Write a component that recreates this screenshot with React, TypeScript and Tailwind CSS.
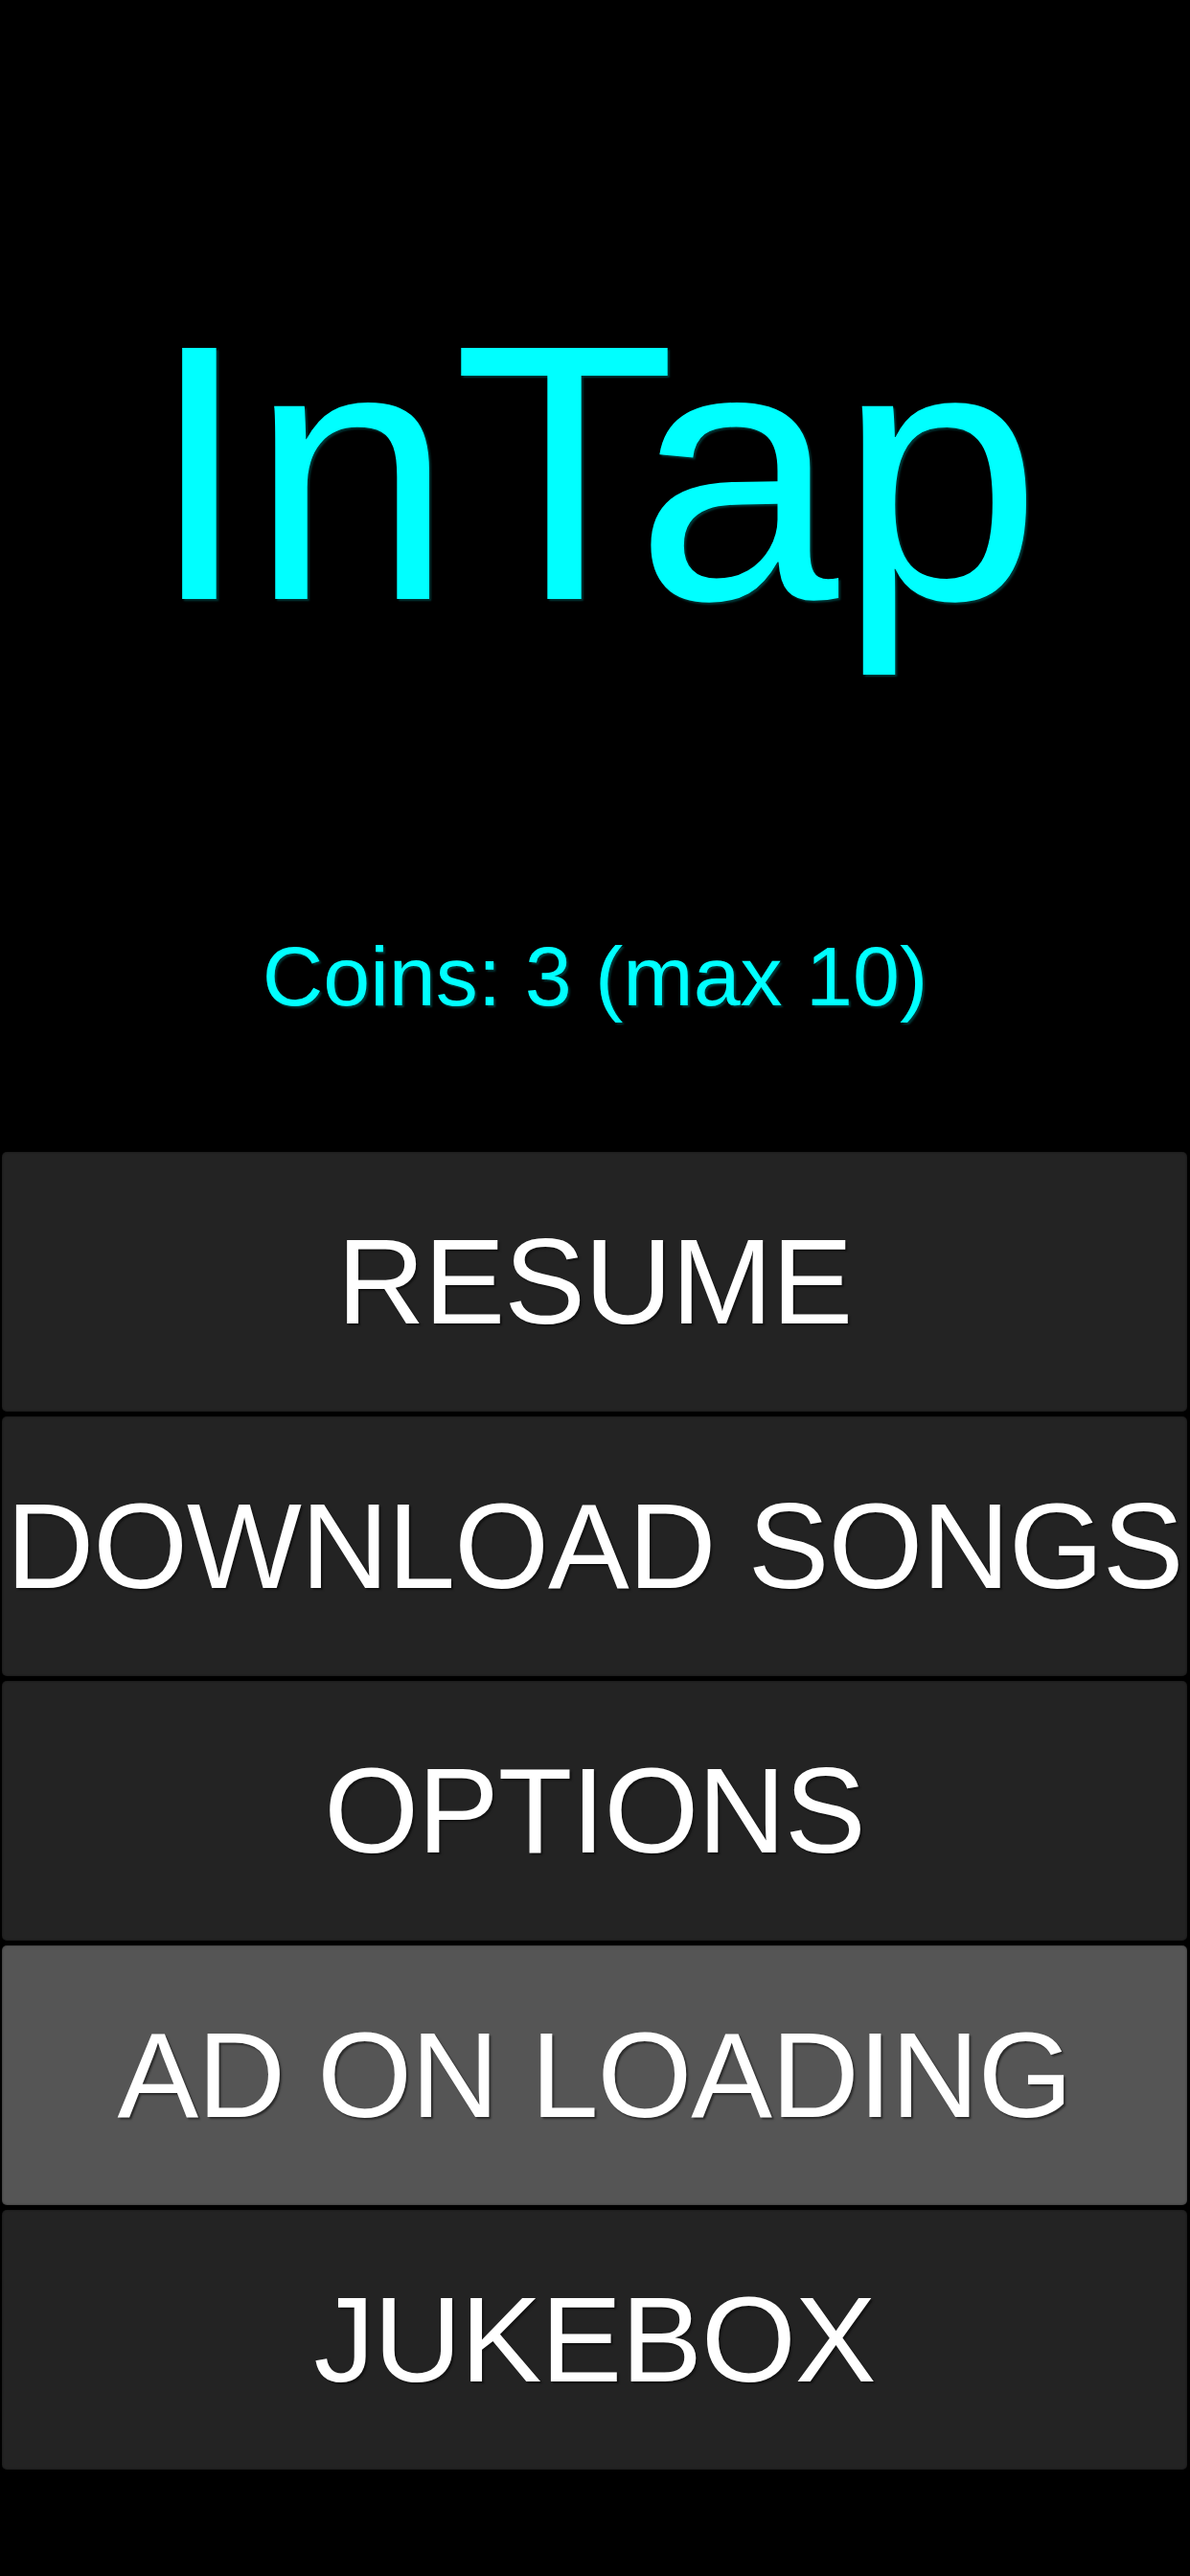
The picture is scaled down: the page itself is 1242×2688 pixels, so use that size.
import React from 'react';

const menuItems = [
  { label: 'RESUME', active: false },
  { label: 'DOWNLOAD SONGS', active: false },
  { label: 'OPTIONS', active: false },
  { label: 'AD ON LOADING', active: true },
  { label: 'JUKEBOX', active: false },
];

export default function App() {
  return (
    <div className="w-[1242px] h-[2688px] bg-black flex flex-col font-['Liberation_Sans',Arial,sans-serif] overflow-hidden">
      {/* Title */}
      <div className="mt-[303px] h-[381px] text-[381px] leading-none text-[#00ffff] text-center [text-shadow:2px_2px_2px_rgba(0,60,60,0.9)]">
        InTap
      </div>

      {/* Coins */}
      <div className="mt-[291px] h-[88px] flex justify-center">
        <span className="text-[88px] leading-none text-[#00ffff] whitespace-nowrap [text-shadow:2px_2px_2px_rgba(0,60,60,0.9)]">
          Coins: 3 (max 10)
        </span>
      </div>

      {/* Menu */}
      <div className="mt-[139px] ml-[2px] mr-[3px] flex flex-col gap-[5px]">
        {menuItems.map((item) => (
          <button
            key={item.label}
            type="button"
            className={`h-[271px] rounded-[5px] flex items-center justify-center text-white text-[127px] tracking-[-1px] leading-none whitespace-nowrap shadow-[inset_0_0_2px_rgba(0,0,0,0.6)] [text-shadow:2px_2px_2px_rgba(0,0,0,0.5)] ${
              item.active ? 'bg-[#555555]' : 'bg-[#232323]'
            }`}
          >
            {item.label}
          </button>
        ))}
      </div>
    </div>
  );
}
